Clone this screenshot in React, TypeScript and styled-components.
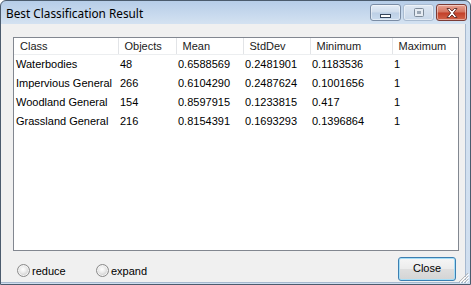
import React from 'react';
import styled, { createGlobalStyle } from 'styled-components';

const Global = createGlobalStyle`
  html, body { margin: 0; padding: 0; background: #ffffff; }
  body { width: 471px; height: 285px; overflow: hidden; }
`;

const Window = styled.div`
  position: relative;
  width: 471px;
  height: 285px;
  box-sizing: border-box;
  border: 1px solid #4b5b6d;
  border-radius: 6px 6px 0 0;
  background: linear-gradient(#b6cde8 0px, #d4e2f1 23px, #cfdeef 100%);
  display: flex;
  flex-direction: column;
  overflow: hidden;
  font-family: "Liberation Sans", Arial, sans-serif;
  font-size: 11px;
`;

const TitleBar = styled.div`
  height: 23px;
  flex: none;
  display: flex;
  align-items: flex-start;
  padding: 0 3px 0 5px;
`;

const Title = styled.div`
  flex: 1;
  font-family: "Noto Sans", "Open Sans", sans-serif;
  font-size: 11.8px;
  line-height: 16px;
  margin-top: 4px;
  color: #000;
`;

const Caption = styled.div`
  display: flex;
  gap: 2px;
  margin-top: 3px;
`;

const CapButton = styled.div<{ $kind: 'min' | 'max' | 'close' }>`
  width: 31px;
  height: 17px;
  box-sizing: border-box;
  border-radius: 3px;
  display: flex;
  align-items: center;
  justify-content: center;
  border: 1px solid
    ${(p) => (p.$kind === 'close' ? '#7b3b35' : p.$kind === 'min' ? '#7a8ca4' : '#a9bbd0')};
  background: ${(p) =>
    p.$kind === 'close'
      ? 'linear-gradient(#e8a394 0%, #d3735e 48%, #c23f28 52%, #d2654a 100%)'
      : p.$kind === 'min'
      ? 'linear-gradient(#e4edf7 0%, #cfdcec 48%, #bccfe5 52%, #cadbee 100%)'
      : 'linear-gradient(#dfe8f3 0%, #d3dfed 50%, #c9d8ea 100%)'};
  box-shadow: inset 0 0 0 1px rgba(255, 255, 255, 0.45);
`;

const ListBox = styled.div`
  width: 446px;
  height: 214px;
  box-sizing: border-box;
  border: 1px solid #828790;
  background: #ffffff;
  overflow: hidden;
`;

const Body = styled.div`
  flex: 1;
  background: #f0f0f0;
  margin: 0 4px 1px 0;
  padding: 13px 6px 0 12px;
  display: flex;
  flex-direction: column;
  border-right: 1px solid #a7b9cf;
  border-bottom: 1px solid #a7b9cf;
`;

const Table = styled.table`
  border-collapse: collapse;
  table-layout: fixed;
  width: 444px;
  font-family: "Liberation Sans", Arial, sans-serif;
  font-size: 11px;
`;

const HeadCell = styled.th`
  height: 16px;
  padding: 0 0 0 6px;
  text-align: left;
  font-weight: normal;
  color: #1a1a1a;
  border-right: 1px solid #e2e4e7;
  border-bottom: 1px solid #eceef0;
  white-space: nowrap;
  overflow: hidden;
  vertical-align: middle;
`;

const Cell = styled.td`
  height: 17px;
  padding: 0 0 2px 2px;
  color: #000;
  white-space: nowrap;
  overflow: hidden;
  vertical-align: middle;
`;

const Footer = styled.div`
  display: flex;
  align-items: center;
  margin-top: 6px;
  height: 24px;
`;

const RadioGroup = styled.label<{ $w: number; $indent?: number }>`
  display: flex;
  align-items: center;
  gap: 2px;
  width: ${(p) => p.$w}px;
  padding-left: ${(p) => p.$indent ?? 0}px;
  margin-top: 3px;
  color: #000;
`;

const RadioDot = styled.span`
  width: 13px;
  height: 13px;
  box-sizing: border-box;
  border-radius: 50%;
  border: 1px solid #8a8a8a;
  background: radial-gradient(circle at 45% 40%, #ffffff 0%, #ececec 35%, #cfcfcf 70%, #e6e6e6 100%);
  box-shadow: inset 0 0 0 1px #f4f4f4;
`;

const Spacer = styled.div`
  flex: 1;
`;

const CloseButton = styled.button`
  width: 58px;
  height: 24px;
  margin-right: 3px;
  box-sizing: border-box;
  border: 1px solid #3c7fb1;
  border-radius: 3px;
  background: linear-gradient(#f6f6f6 0%, #ececec 48%, #dedede 52%, #d4d4d4 100%);
  box-shadow: inset 0 0 0 1px #a6def7;
  font-family: "Liberation Sans", Arial, sans-serif;
  font-size: 11px;
  color: #000;
  padding: 0 0 2px 0;
`;

const Grip = styled.svg`
  position: absolute;
  right: 1px;
  bottom: 1px;
`;

const columns = [
  { name: 'Class', width: 104 },
  { name: 'Objects', width: 58 },
  { name: 'Mean', width: 67 },
  { name: 'StdDev', width: 67 },
  { name: 'Minimum', width: 82 },
  { name: 'Maximum', width: 66 },
];

const rows = [
  ['Waterbodies', '48', '0.6588569', '0.2481901', '0.1183536', '1'],
  ['Impervious General', '266', '0.6104290', '0.2487624', '0.1001656', '1'],
  ['Woodland General', '154', '0.8597915', '0.1233815', '0.417', '1'],
  ['Grassland General', '216', '0.8154391', '0.1693293', '0.1396864', '1'],
];

export default function App() {
  return (
    <>
      <Global />
      <Window>
        <TitleBar>
          <Title>Best Classification Result</Title>
          <Caption>
            <CapButton $kind="min">
              <svg width="12" height="14" viewBox="0 0 12 14">
                <rect x="0.5" y="8.5" width="10" height="3" fill="#fff" stroke="#35465c" />
              </svg>
            </CapButton>
            <CapButton $kind="max">
              <svg width="10" height="9" viewBox="0 0 10 9">
                <rect x="0.5" y="0.5" width="9" height="8" fill="#e6ecf3" stroke="#7d8a99" rx="1" />
                <rect x="3" y="3" width="4" height="3" fill="#9aa6b4" />
              </svg>
            </CapButton>
            <CapButton $kind="close">
              <svg width="14" height="12" viewBox="0 0 14 12">
                <path
                  d="M2 1.5 L4.6 1.5 L7 4 L9.4 1.5 L12 1.5 L8.4 6 L12 10.5 L9.4 10.5 L7 8 L4.6 10.5 L2 10.5 L5.6 6 Z"
                  fill="#ffffff"
                  stroke="#5a2a26"
                  strokeWidth="0.9"
                  strokeLinejoin="round"
                />
              </svg>
            </CapButton>
          </Caption>
        </TitleBar>
        <Body>
          <ListBox>
            <Table>
              <colgroup>
                {columns.map((c) => (
                  <col key={c.name} style={{ width: c.width }} />
                ))}
              </colgroup>
              <thead>
                <tr>
                  {columns.map((c) => (
                    <HeadCell key={c.name}>{c.name}</HeadCell>
                  ))}
                </tr>
              </thead>
              <tbody>
                {rows.map((r) => (
                  <tr key={r[0]}>
                    {r.map((v, i) => (
                      <Cell key={i}>{v}</Cell>
                    ))}
                  </tr>
                ))}
              </tbody>
            </Table>
          </ListBox>
          <Footer>
            <RadioGroup $w={79} $indent={4}>
              <RadioDot />
              reduce
            </RadioGroup>
            <RadioGroup $w={80}>
              <RadioDot />
              expand
            </RadioGroup>
            <Spacer />
            <CloseButton>Close</CloseButton>
          </Footer>
        </Body>
        <Grip width="12" height="12" viewBox="0 0 12 12">
          <g stroke="#b8b8b8" strokeWidth="1">
            <line x1="11" y1="2" x2="2" y2="11" />
            <line x1="11" y1="5" x2="5" y2="11" />
            <line x1="11" y1="8" x2="8" y2="11" />
          </g>
          <g stroke="#ffffff" strokeWidth="1">
            <line x1="12" y1="3" x2="3" y2="12" />
            <line x1="12" y1="6" x2="6" y2="12" />
            <line x1="12" y1="9" x2="9" y2="12" />
          </g>
        </Grip>
      </Window>
    </>
  );
}
